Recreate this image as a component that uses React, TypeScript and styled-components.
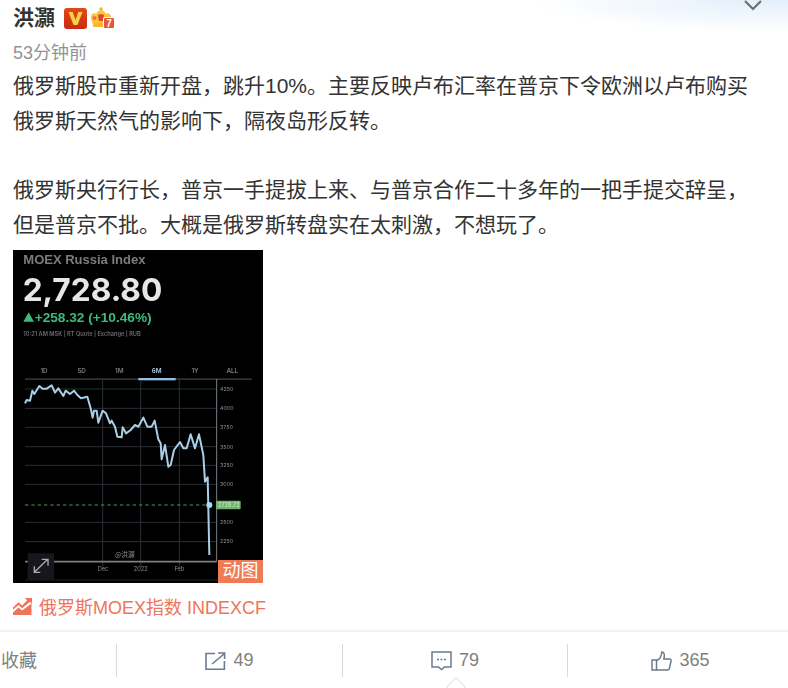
import React from 'react'
import styled, { createGlobalStyle } from 'styled-components'

const GlobalStyle = createGlobalStyle`
  html, body {
    margin: 0;
    padding: 0;
    background: #fff;
  }
  body {
    font-family: "Liberation Sans", "Noto Sans CJK SC", sans-serif;
    color: #333;
  }
`

const Page = styled.div`
  position: relative;
  width: 788px;
  height: 688px;
  overflow: hidden;
  background: radial-gradient(ellipse 230px 32px at 760px 0, #e3effb 0%, rgba(255, 255, 255, 0) 100%);
`

const Chevron = styled.svg`
  position: absolute;
  top: -1px;
  left: 743px;
`

const Post = styled.div`
  padding: 3px 0 0 13px;
`

const NameRow = styled.div`
  display: flex;
  align-items: center;
  height: 30px;
`

const Name = styled.span`
  font-size: 21px;
  font-weight: 700;
  color: #333;
  line-height: 30px;
`

const Badges = styled.span`
  display: flex;
  align-items: center;
  gap: 3px;
  margin-left: 9px;
`

const Time = styled.div`
  margin-top: 7px;
  font-size: 18px;
  line-height: 26px;
  color: #939393;
`

const Body = styled.div`
  margin-top: 3px;
  width: 760px;
  font-size: 21px;
  line-height: 34.5px;
  color: #333;
`

const Line = styled.div<{ $blank?: boolean }>`
  height: ${({ $blank }) => ($blank ? '35px' : '34.5px')};
  white-space: nowrap;
`

const Thumb = styled.div`
  position: relative;
  margin-top: 8px;
  width: 250px;
  height: 333px;
  background: #000;
`

const ChartSvg = styled.svg`
  display: block;
`

const GifTag = styled.span`
  position: absolute;
  right: 0;
  bottom: 0;
  width: 45px;
  height: 23px;
  background: #ee7b55;
  color: #fff;
  font-size: 18px;
  line-height: 23px;
  text-align: center;
`

const TopicLink = styled.div`
  display: flex;
  align-items: center;
  gap: 7px;
  margin-top: 11px;
  height: 24px;
  font-size: 18px;
  color: #f0745a;
`

const Footer = styled.div`
  display: grid;
  grid-template-columns: 116px 226px 225px 226px;
  margin-top: 12px;
  height: 57px;
  padding-top: 12px;
  box-sizing: border-box;
  border-top: 2px solid #f2f2f2;
  font-size: 18px;
  color: #808080;
`

const Action = styled.div<{ $first?: boolean }>`
  display: flex;
  align-items: center;
  justify-content: ${({ $first }) => ($first ? 'flex-start' : 'center')};
  gap: 7px;
  height: 33px;
  box-sizing: border-box;
  padding: ${({ $first }) => ($first ? '0 0 3px 1px' : '0')};
  border-left: ${({ $first }) => ($first ? 'none' : '1px solid #d9d9d9')};
`

const CommentNotch = styled.div`
  position: absolute;
  left: 449px;
  top: 680px;
  width: 12px;
  height: 12px;
  background: #fff;
  border: 1px solid #e4e4e4;
  transform: rotate(45deg);
`

const pricePoints =
  '75,70 80,60 90,62 97,32 103,42 118,18 128,26 140,26 155,16 165,38 175,25 190,48 197,32 210,42 222,32 232,45 243,55 262,50 272,85 278,113 282,92 290,92 295,128 308,92 318,100 330,130 335,122 345,140 352,170 365,172 368,142 378,160 392,150 405,135 415,140 430,113 442,140 455,140 464,122 475,178 482,190 485,238 495,195 505,260 512,255 522,210 540,186 550,205 560,205 572,163 585,205 597,163 610,225 615,305 623,292 628,525'

const gridRows = [85, 142, 200, 256, 313, 427, 485]
const gridCols = [308, 422, 538]
const axisLabels = [
  ['4250', 33],
  ['4000', 91],
  ['3750', 148],
  ['3500', 206],
  ['3250', 261],
  ['3000', 319],
  ['2500', 433],
  ['2250', 490],
] as const
const tabs = [
  ['1D', 132],
  ['5D', 245],
  ['1M', 358],
  ['6M', 470],
  ['1Y', 585],
  ['ALL', 697],
] as const

// viewBox is in 3x units of the picture, so coordinates read straight off a zoomed crop
function IndexChart() {
  return (
    <ChartSvg width="250" height="333" viewBox="39 -390 750 999" fontFamily="Inter, sans-serif">
      <defs>
        <filter id="soft">
          <feGaussianBlur stdDeviation="1.8" />
        </filter>
      </defs>
      <rect x="39" y="-390" width="750" height="999" fill="#000" />
      <g filter="url(#soft)">
        <text x="70" y="-347" fontSize="39" fontWeight="700" fill="#7c7c7c" fontFamily="Liberation Sans, sans-serif">MOEX Russia Index</text>
        <text x="68" y="-238" fontSize="95" fontWeight="700" fill="#e6e6e6">2,728.80</text>
        <polygon points="70,-175 102,-175 86,-203" fill="#3dbb7c" />
        <text x="104" y="-174" fontSize="41" fontWeight="700" fill="#3dbb7c" fontFamily="Liberation Sans, sans-serif">+258.32 (+10.46%)</text>
        <text x="70" y="-133" fontSize="17" fontWeight="600" fill="#6c6c6c">10:21 AM MSK | RT Quote | Exchange | RUB</text>
        {tabs.map(([label, x]) => (
          <text key={label} x={x} y="-21" fontSize="19" fontWeight="600" textAnchor="middle" fill={label === '6M' ? '#a8cce6' : '#7c7c7c'}>
            {label}
          </text>
        ))}
        <rect x="75" y="-5" width="680" height="5" fill="#333" />
        <rect x="415" y="-6" width="112" height="7" fill="#8fc1e6" />
        {gridRows.map((y) => (
          <line key={y} x1="75" x2="650" y1={y} y2={y} stroke="#2a2f36" strokeWidth="3" />
        ))}
        <line x1="75" x2="650" y1="27" y2="27" stroke="#1d3a28" strokeWidth="3" />
        {gridCols.map((x) => (
          <line key={x} x1={x} x2={x} y1="0" y2="560" stroke="#2a2f36" strokeWidth="3" />
        ))}
        <line x1="650" x2="650" y1="-3" y2="545" stroke="#7a8088" strokeWidth="3" />
        <line x1="75" x2="650" y1="545" y2="545" stroke="#808080" strokeWidth="5" />
        <line x1="75" x2="755" y1="600" y2="600" stroke="#222" strokeWidth="3" />
        <line x1="75" x2="640" y1="375" y2="375" stroke="#4c9a58" strokeWidth="3" strokeDasharray="10 9" />
        <polyline points={pricePoints} fill="none" stroke="#a9cfe6" strokeWidth="6" strokeLinejoin="round" />
        <circle cx="628" cy="375" r="9" fill="#a9dcf2" />
        <rect x="648" y="362" width="74" height="26" rx="3" fill="#6fb36a" />
        <text x="654" y="381" fontSize="17" fill="#d6ecd2">2728.72</text>
        {axisLabels.map(([label, y]) => (
          <text key={label} x="660" y={y} fontSize="16" fill="#8a8f96">{label}</text>
        ))}
        <text x="309" y="573" fontSize="17" textAnchor="middle" fill="#8a8f96">Dec</text>
        <text x="422" y="573" fontSize="17" textAnchor="middle" fill="#8a8f96">2022</text>
        <text x="538" y="573" fontSize="17" textAnchor="middle" fill="#8a8f96">Feb</text>
        <text x="345" y="531" fontSize="20" fill="#8a8f96" fontFamily="Noto Sans CJK SC, sans-serif">@洪灝</text>
        <rect x="83" y="520" width="79" height="80" fill="#14191a" />
        <g fill="none" stroke="#a8adb0" strokeWidth="4">
          <path d="M103 577 L143 538 M125 538 H144 V557 M103 559 V577 H121" />
        </g>
      </g>
    </ChartSvg>
  )
}

function VipBadge() {
  return (
    <svg width="23" height="21" viewBox="0 0 23 21">
      <defs>
        <linearGradient id="vipRed" x1="0" y1="0" x2="0" y2="1">
          <stop offset="0" stopColor="#e2481c" />
          <stop offset="1" stopColor="#c92a12" />
        </linearGradient>
      </defs>
      <rect width="23" height="21" rx="3" fill="url(#vipRed)" />
      <path d="M4.5 4h4.2l2.8 8 2.8-8h4.2l-5 13h-4z" fill="#f6cf45" />
    </svg>
  )
}

function CrownBadge() {
  return (
    <svg width="25" height="22" viewBox="0 0 25 22">
      <circle cx="11" cy="2" r="1.8" fill="#f7b733" />
      <path d="M1 10c0-3 3-5 5-3 1-2 3-4 5-4s4 2 5 4c2-2 5 0 5 3 0 3-1 5-2 7H3C2 15 1 13 1 10z" fill="#fbc53f" />
      <path d="M8 8c1-1 5-1 6 0l-1 6H9z" fill="#e2452c" />
      <circle cx="4.5" cy="11" r="2" fill="#f0743a" />
      <rect x="3" y="16" width="16" height="4" rx="1.5" fill="#f9b52e" />
      <rect x="13" y="10" width="12" height="12" rx="2" fill="#fff" />
      <rect x="14" y="11" width="10" height="10" rx="1" fill="#e9553a" />
      <text x="19" y="19.5" fontSize="10" fontWeight="700" textAnchor="middle" fill="#fff">7</text>
    </svg>
  )
}

function TrendIcon() {
  return (
    <svg width="19" height="18" viewBox="0 0 19 18" fill="#f0745a">
      <path d="M0 18v-2.6l5.5-5 3.6 3.2 9.4-7V18z" />
      <path d="M0 10.4 5.5 5.2l3.6 3.2L14 3.6 12.2 1H19v6l-2-2.2-7.9 6.4-3.6-3.2L0 12.8z" />
    </svg>
  )
}

function ShareIcon() {
  return (
    <svg width="21" height="18" viewBox="0 0 21 18" fill="none" stroke="#6c7a8e" strokeWidth="1.6">
      <path d="M10 1.5H1v15.7h18.4V9" />
      <path d="M7 12 19 2M13 1h6.6v6" />
    </svg>
  )
}

function CommentIcon() {
  return (
    <svg width="21" height="20" viewBox="0 0 21 20" fill="none" stroke="#6c7a8e" strokeWidth="1.5">
      <path d="M1 1h19v15h-6.5l-3 2.5-3-2.5H1z" />
      <path d="M6 8.5h2M9.5 8.5h2M13 8.5h2" />
    </svg>
  )
}

function LikeIcon() {
  return (
    <svg width="21" height="20" viewBox="0 0 21 20" fill="none" stroke="#6c7a8e" strokeWidth="1.5">
      <path d="M1 9h4.5v10H1z" />
      <path d="M5.5 9.5c3-1 5-4 5.3-8.5 2.2 0 3.2 2.5 2 7h5.7c1.3 0 1.8 1 1.5 2.2l-1.6 7.3c-.2 1-.8 1.5-1.8 1.5H5.5" />
    </svg>
  )
}

export default function App() {
  return (
    <Page>
      <GlobalStyle />
      <Chevron width="20" height="12" viewBox="0 0 20 12" fill="none" stroke="#6f6f6f" strokeWidth="2.2">
        <path d="M2 2l8 8 8-8" />
      </Chevron>
      <Post>
        <NameRow>
          <Name>洪灝</Name>
          <Badges>
            <VipBadge />
            <CrownBadge />
          </Badges>
        </NameRow>
        <Time>53分钟前</Time>
        <Body>
          <Line>俄罗斯股市重新开盘，跳升10%。主要反映卢布汇率在普京下令欧洲以卢布购买</Line>
          <Line>俄罗斯天然气的影响下，隔夜岛形反转。</Line>
          <Line $blank />
          <Line>俄罗斯央行行长，普京一手提拔上来、与普京合作二十多年的一把手提交辞呈，</Line>
          <Line>但是普京不批。大概是俄罗斯转盘实在太刺激，不想玩了。</Line>
        </Body>
        <Thumb>
          <IndexChart />
          <GifTag>动图</GifTag>
        </Thumb>
        <TopicLink>
          <TrendIcon />
          俄罗斯MOEX指数 INDEXCF
        </TopicLink>
      </Post>
      <Footer>
        <Action $first>收藏</Action>
        <Action>
          <ShareIcon />
          49
        </Action>
        <Action>
          <CommentIcon />
          79
        </Action>
        <Action>
          <LikeIcon />
          365
        </Action>
      </Footer>
      <CommentNotch />
    </Page>
  )
}
